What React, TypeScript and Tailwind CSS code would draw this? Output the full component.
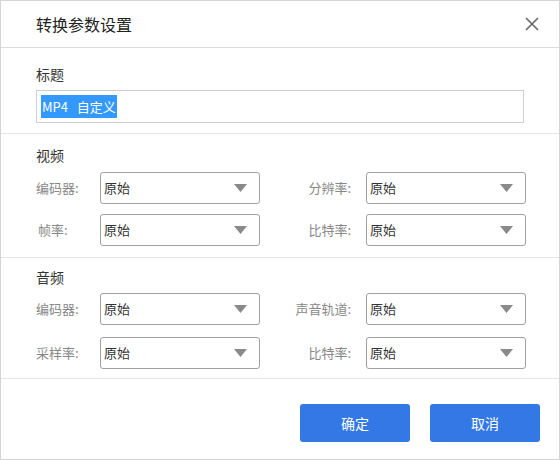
import React from 'react';

const font = { fontFamily: '"Microsoft YaHei", "Noto Sans CJK SC", sans-serif' };

function Select() {
  return (
    <div className="flex h-[32px] w-[160px] items-center justify-between rounded-[3px] border border-[#a0a0a0] bg-white pl-[3px] pr-[12px] text-[13px] text-[#333]">
      <span>原始</span>
      <svg width="13" height="8" viewBox="0 0 13 8"><path d="M0 0h13L6.5 8z" fill="#8a8a8a" /></svg>
    </div>
  );
}

function Row({ l1, l2, pl1 = 0 }: { l1: string; l2: string; pl1?: number }) {
  return (
    <div className="flex items-center pl-[35px] text-[13px] text-[#888]">
      <div className={`w-[64px] ${pl1 ? 'pl-[2px]' : ''}`}>{l1}</div>
      <Select />
      <div className="w-[106px] pr-[15px] text-right">{l2}</div>
      <Select />
    </div>
  );
}

export default function App() {
  return (
    <div style={font} className="flex h-[460px] w-[560px] flex-col border border-[#d4d4d4] bg-white">
      <div className="flex h-[47px] shrink-0 items-center justify-between border-b border-[#dcdcdc] pl-[35px] pr-[20px]">
        <span className="text-[16px] text-[#222]">转换参数设置</span>
        <svg width="14" height="14" viewBox="0 0 14 14"><path d="M1 1l12 12M13 1L1 13" stroke="#666" strokeWidth="1.6" /></svg>
      </div>
      <div className="h-[86px] shrink-0 border-b border-[#e4e4e4] px-[35px] pt-[16px]">
        <div className="text-[14px] text-[#333]">标题</div>
        <div className="mt-[5px] flex h-[33px] items-center border border-[#cfcfcf] px-[4px]">
          <span className="bg-[#3399ff] px-[1px] py-[2px] text-[13px] text-white">MP4&nbsp;&nbsp;&nbsp;自定义</span>
        </div>
      </div>
      <div className="flex h-[124px] shrink-0 flex-col gap-[6px] border-b border-[#e4e4e4] pt-[11px]">
        <div className="pl-[35px] text-[14px] text-[#333]">视频</div>
        <div className="flex flex-col gap-[10px]">
          <Row l1="编码器:" l2="分辨率:" />
          <Row l1="帧率:" l2="比特率:" pl1={1} />
        </div>
      </div>
      <div className="flex h-[121px] shrink-0 flex-col gap-[5px] border-b border-[#e4e4e4] pt-[9px]">
        <div className="pl-[35px] text-[14px] text-[#333]">音频</div>
        <div className="flex flex-col gap-[12px]">
          <Row l1="编码器:" l2="声音轨道:" />
          <Row l1="采样率:" l2="比特率:" />
        </div>
      </div>
      <div className="flex justify-end gap-[20px] pr-[19px] pt-[25px]">
        <button className="h-[38px] w-[110px] rounded-[3px] bg-[#3478e6] text-[14px] text-white">确定</button>
        <button className="h-[38px] w-[110px] rounded-[3px] bg-[#3478e6] text-[14px] text-white">取消</button>
      </div>
    </div>
  );
}
